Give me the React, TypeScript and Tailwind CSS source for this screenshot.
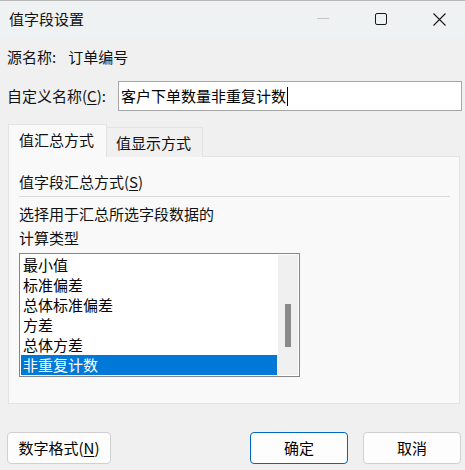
import React from "react";

const font = { fontFamily: '"Noto Sans CJK SC", "Noto Sans", sans-serif' };

function U({ children }: { children: React.ReactNode }) {
  return <span className="underline underline-offset-[2px] decoration-[1px]">{children}</span>;
}

export default function App() {
  const items = ["最小值", "标准偏差", "总体标准偏差", "方差", "总体方差", "非重复计数"];
  return (
    <div
      className="w-[465px] h-[470px] bg-[#f0f0f0] flex flex-col overflow-hidden text-[15px] leading-[20px] text-[#111]"
      style={font}
    >
      {/* title bar */}
      <div className="h-[37px] shrink-0 flex items-stretch bg-[#eff2f3] border-t border-[#b8b8b8]">
        <div className="flex items-center pl-[9px] flex-1 pb-[1px]">值字段设置</div>
        <div className="flex mr-[-3px]">
          <div className="w-[58px] flex items-center justify-center">
            <svg width="12" height="2" viewBox="0 0 12 2">
              <rect x="0" y="0" width="12" height="1" fill="#c4c4c4" />
            </svg>
          </div>
          <div className="w-[58px] flex items-center justify-center">
            <svg width="12" height="12" viewBox="0 0 12 12">
              <rect x="0.5" y="0.5" width="11" height="11" rx="1.5" fill="none" stroke="#1a1a1a" strokeWidth="1" />
            </svg>
          </div>
          <div className="w-[58px] flex items-center justify-center">
            <svg width="13" height="13" viewBox="0 0 13 13">
              <path d="M0.5 0.5 L12.5 12.5 M12.5 0.5 L0.5 12.5" stroke="#1a1a1a" strokeWidth="1.1" />
            </svg>
          </div>
        </div>
      </div>

      {/* source name */}
      <div className="mt-[10px] h-[20px] flex pl-[7px]">
        <span>源名称:</span>
        <span className="ml-[12px]">订单编号</span>
      </div>

      {/* custom name */}
      <div className="mt-[14px] h-[30px] flex items-center pl-[7px]">
        <span className="w-[111px]">
          自定义名称(<U>C</U>):
        </span>
        <div className="w-[344px] h-[30px] bg-white border border-[#a6a6a6] flex items-center pl-[2px]">
          <span className="text-[15px] text-black">客户下单数量非重复计数</span>
          <span className="w-px h-[19px] bg-black ml-[1px]" />
        </div>
      </div>

      {/* tabs */}
      <div className="mt-[13px] ml-[8px] flex items-end h-[33px] relative z-10">
        <div className="w-[99px] h-[33px] bg-[#f9f9f9] border border-b-0 border-[#e3e3e3] flex items-center pl-[10px] pb-[2px]">
          值汇总方式
        </div>
        <div className="w-[96px] h-[30px] bg-[#f0f0f0] border border-l-0 border-b-0 border-[#e3e3e3] flex items-center pl-[9px]">
          值显示方式
        </div>
      </div>

      {/* panel */}
      <div className="mt-[-1px] mx-[8px] w-[452px] h-[248px] bg-[#f9f9f9] border border-[#e3e3e3] flex flex-col px-[10px]">
        <div className="mt-[15px] h-[20px]">
          值字段汇总方式(<U>S</U>)
        </div>
        <div className="mt-[4px] h-px bg-[#dadada] w-[431px]" />
        <div className="mt-[7px] h-[20px]">选择用于汇总所选字段数据的</div>
        <div className="mt-[4px] h-[20px]">计算类型</div>
        <div className="mt-[5px] w-[281px] h-[124px] bg-white border border-[#868686] p-[1px] flex gap-[1px]">
          <div className="flex-1 flex flex-col">
            {items.map((t, i) => (
              <div
                key={t}
                className={
                  i === items.length - 1
                    ? "h-[20px] pl-[2px] bg-[#0078d7] text-white"
                    : "h-[20px] pl-[2px] text-black"
                }
              >
                {t}
              </div>
            ))}
          </div>
          <div className="w-[20px] bg-[#f0f0f0] flex flex-col items-center">
            <div className="mt-[49px] w-[6px] h-[43px] bg-[#8a8a8a]" />
          </div>
        </div>
      </div>

      {/* buttons */}
      <div className="mt-[28px] flex pl-[7px] pr-[4px] h-[32px]">
        <button className="w-[104px] h-[32px] bg-[#fdfdfd] border border-[#d0d0d0] rounded-[4px] text-[15px] text-black">
          数字格式(<U>N</U>)
        </button>
        <div className="flex-1" />
        <button className="w-[98px] h-[32px] bg-[#fdfdfd] border border-[#0067c0] rounded-[4px] text-[15px] text-black">
          确定
        </button>
        <button className="ml-[15px] w-[98px] h-[32px] bg-[#fdfdfd] border border-[#d0d0d0] rounded-[4px] text-[15px] text-black">
          取消
        </button>
      </div>
    </div>
  );
}
